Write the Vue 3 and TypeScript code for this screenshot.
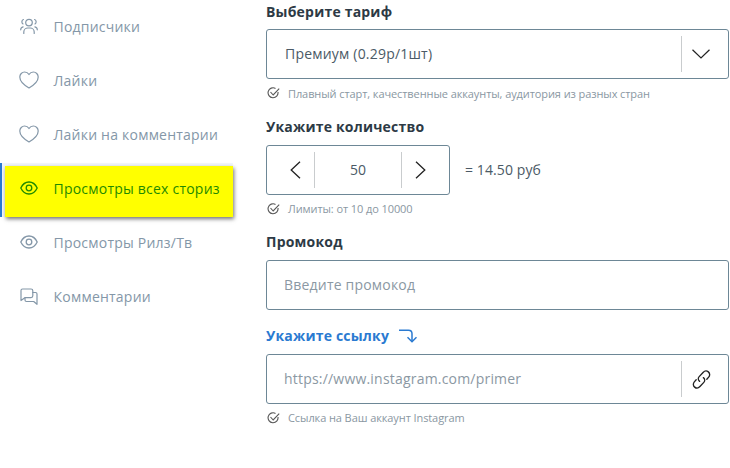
<script setup lang="ts">
const items = [
  { label: 'Подписчики', icon: 'users' },
  { label: 'Лайки', icon: 'heart' },
  { label: 'Лайки на комментарии', icon: 'heart' },
  { label: 'Просмотры всех сториз', icon: 'eye', active: true },
  { label: 'Просмотры Рилз/Тв', icon: 'eye' },
  { label: 'Комментарии', icon: 'chat' },
]
</script>

<template>
  <div class="page">
    <aside class="side">
      <div v-for="it in items" :key="it.label" class="item" :class="{ active: it.active }">
        <span class="ico">
          <svg v-if="it.icon === 'users'" width="18" height="16" viewBox="0 0 18 16" fill="none" stroke="currentColor" stroke-width="1.200" stroke-linecap="round" stroke-linejoin="round">
            <circle cx="9" cy="4.600" r="3.300" />
            <path d="M3.800 15.400v-1.400c0-2.400 2-4 4-4h2.400c2 0 4 1.600 4 4v1.400" />
            <path d="M3.400 1.500a2.500 2.500 0 0 0-.4 4.400" />
            <path d="M14.600 1.500a2.500 2.500 0 0 1 .4 4.400" />
            <path d="M.7 11.800c0-1.600.9-2.700 2.400-3" />
            <path d="M17.300 11.800c0-1.600-.9-2.700-2.400-3" />
          </svg>
          <svg v-else-if="it.icon === 'heart'" width="20" height="18" viewBox="0 0 20 18" fill="none" stroke="currentColor" stroke-width="1.200" stroke-linejoin="round">
            <path d="M10 17C7 15.300.8 11.200.8 6.100.8 3.200 3 1 5.600 1 7.400 1 9 1.900 10 3.500 11 1.900 12.600 1 14.400 1c2.600 0 4.800 2.200 4.800 5.100C19.200 11.200 13 15.300 10 17z" />
          </svg>
          <svg v-else-if="it.icon === 'eye'" width="18" height="14" viewBox="0 0 18 14" fill="none" stroke="currentColor" stroke-width="1.300">
            <path d="M.8 7C2.600 3.200 5.500 1 9 1s6.400 2.200 8.200 6c-1.800 3.800-4.700 6-8.200 6S2.600 10.800.8 7z" />
            <circle cx="9" cy="7" r="2.800" />
          </svg>
          <svg v-else width="18" height="17" viewBox="0 0 18 17" fill="none" stroke="currentColor" stroke-width="1.200" stroke-linejoin="round" stroke-linecap="round">
            <path d="M2.500 1h8.500c1 0 1.800.8 1.800 1.800v5c0 1-.8 1.800-1.800 1.800H5.200L1 12.500V2.500C1 1.700 1.700 1 2.500 1z" />
            <path d="M12.800 4.500h2.700c.9 0 1.500.6 1.500 1.500v10.300l-3.300-2.800H6.500c-.9 0-1.500-.6-1.500-1.500V9.800" />
          </svg>
        </span>
        <span class="txt">{{ it.label }}</span>
      </div>
    </aside>

    <main class="form">
      <div class="label first">Выберите тариф</div>
      <div class="box">
        <span class="value">Премиум (0.29р/1шт)</span>
        <span class="addon">
          <svg width="18" height="10" viewBox="0 0 18 10" fill="none" stroke="#222" stroke-width="1.200"><path d="M.5.700 9 9 17.500.700" /></svg>
        </span>
      </div>
      <div class="hint hint-first">
        <svg class="chk" width="13" height="12" viewBox="0 0 13 12" fill="none" stroke="#555" stroke-width="1.100"><path d="M11 5A5 5 0 1 1 8.500 1.400" /><path d="M3.500 5 6.200 8l6-6.300" /></svg>
        Плавный старт, качественные аккаунты, аудитория из разных стран
      </div>

      <div class="label qty">Укажите количество</div>
      <div class="qty-row">
        <div class="stepper">
          <span class="step">
            <svg width="11" height="18" viewBox="0 0 11 18" fill="none" stroke="#222" stroke-width="1.300"><path d="M10 .700 1.200 9 10 17.300" /></svg>
          </span>
          <span class="num">50</span>
          <span class="step right">
            <svg width="11" height="18" viewBox="0 0 11 18" fill="none" stroke="#222" stroke-width="1.300"><path d="M1 .700 9.800 9 1 17.300" /></svg>
          </span>
        </div>
        <span class="sum">= 14.50 руб</span>
      </div>
      <div class="hint">
        <svg class="chk" width="13" height="12" viewBox="0 0 13 12" fill="none" stroke="#555" stroke-width="1.100"><path d="M11 5A5 5 0 1 1 8.500 1.400" /><path d="M3.500 5 6.200 8l6-6.300" /></svg>
        Лимиты: от 10 до 10000
      </div>

      <div class="label promo">Промокод</div>
      <div class="box ph-box"><span class="ph">Введите промокод</span></div>

      <div class="label link blue">
        Укажите ссылку
        <svg width="19" height="14" viewBox="0 0 19 14" fill="none" stroke="#2a7ad1" stroke-width="1.500"><path d="M1 1.300h9.500c2.500 0 3.500 1.200 3.500 3.500v8" /><path d="M9.500 8.300 14 12.800l4.500-4.500" /></svg>
      </div>
      <div class="box ph-box">
        <span class="ph">https://www.instagram.com/primer</span>
        <span class="addon">
          <svg width="21" height="21" viewBox="0 0 19 19" fill="none" stroke="#222" stroke-width="1.200" stroke-linecap="round"><path d="M7.800 11.200c-1.500-1.200-1.600-3-.4-4.300l3.500-3.800c1.400-1.500 3.400-1.700 4.800-.5s1.600 3.300.3 4.800l-1.700 1.900" /><path d="M11.200 7.800c1.500 1.200 1.600 3 .4 4.300l-3.500 3.800c-1.400 1.500-3.400 1.700-4.800.5s-1.600-3.300-.3-4.800l1.700-1.900" /></svg>
        </span>
      </div>
      <div class="hint">
        <svg class="chk" width="13" height="12" viewBox="0 0 13 12" fill="none" stroke="#555" stroke-width="1.100"><path d="M11 5A5 5 0 1 1 8.500 1.400" /><path d="M3.500 5 6.200 8l6-6.300" /></svg>
        Ссылка на Ваш аккаунт Instagram
      </div>
    </main>
  </div>
</template>

<style>
html, body { margin: 0; background: #fff; overflow: hidden; }
</style>

<style scoped>
.page {
  width: 730px;
  height: 468px;
  display: flex;
  font-family: "Open Sans", sans-serif;
  background: #fff;
  overflow: hidden;
}
.side {
  width: 266px;
  flex: none;
  display: flex;
  flex-direction: column;
  margin-top: -1px;
}
.item {
  height: 54px;
  flex: none;
  width: 228px;
  margin-left: 5px;
  display: flex;
  align-items: center;
  color: #8497a8;
  font-size: 14px;
  letter-spacing: 0.22px;
  box-sizing: border-box;
}
.item.active {
  position: relative;
  isolation: isolate;
  color: #1f8a00;
}
.item.active::before {
  content: "";
  position: absolute;
  z-index: -2;
  left: -5px;
  right: 0;
  top: 2px;
  bottom: -2px;
  background: #f2f6fa;
  border-left: 2px solid #2a7ad1;
}
.item.active::after {
  content: "";
  position: absolute;
  z-index: -1;
  left: 0;
  right: 0;
  top: 5px;
  bottom: -2px;
  background: #ffff00;
  box-shadow: 1px 2px 4px rgba(0, 0, 0, 0.55);
}
.ico {
  width: 48.500px;
  padding-left: 15px;
  box-sizing: border-box;
  flex: none;
  display: flex;
  align-items: center;
}
.item:nth-child(2) .ico, .item:nth-child(3) .ico { padding-left: 14px; }
.form {
  width: 463px;
  flex: none;
  display: flex;
  flex-direction: column;
  color: #444;
}
.label {
  font-size: 14px;
  font-weight: 700;
  line-height: 24px;
  height: 24px;
  flex: none;
  color: #2d3a45;
  letter-spacing: 0.2px;
}
.first { margin-bottom: 5px; }
.qty { margin-top: 8px; margin-bottom: 6px; }
.promo { margin-top: 7px; margin-bottom: 6px; }
.link { margin-top: 14px; margin-bottom: 6px; display: flex; align-items: center; gap: 9px; }
.blue { color: #2a7ad1; }
.box {
  height: 50px;
  flex: none;
  box-sizing: border-box;
  border: 1px solid #6d8796;
  border-radius: 3px;
  display: flex;
  align-items: center;
  font-size: 14px;
  letter-spacing: 0.2px;
}
.value { padding: 0 0 2px 18px; flex: 1; color: #4b5a66; }
.ph { padding: 0 0 2px 17px; flex: 1; color: #8b98a3; }
.addon {
  width: 47px;
  height: 36px;
  padding-right: 8px;
  border-left: 1px solid #c9ccce;
  display: flex;
  align-items: center;
  justify-content: center;
  box-sizing: border-box;
}
.hint {
  height: 28px;
  flex: none;
  box-sizing: border-box;
  padding: 0 0 1px 1px;
  display: flex;
  align-items: center;
  gap: 8px;
  font-size: 11px;
  letter-spacing: -0.09px;
  color: #8a97a2;
}
.hint-first { padding-bottom: 0; }
.chk { flex: none; }
.qty-row { display: flex; align-items: center; gap: 15px; flex: none; }
.stepper {
  width: 184px;
  height: 50px;
  box-sizing: border-box;
  border: 1px solid #6d8796;
  border-radius: 3px;
  display: flex;
  align-items: center;
}
.step {
  width: 48px;
  height: 36px;
  flex: none;
  padding-left: 10px;
  border-right: 1px solid #c9ccce;
  display: flex;
  align-items: center;
  justify-content: center;
  box-sizing: border-box;
}
.step.right { border-right: 0; padding-left: 0; padding-right: 10px; border-left: 1px solid #c9ccce; }
.num { flex: 1; text-align: center; font-size: 14px; padding-bottom: 2px; color: #4b5a66; }
.sum { font-size: 14px; letter-spacing: 0.1px; padding-bottom: 2px; color: #4b5a66; }
</style>
